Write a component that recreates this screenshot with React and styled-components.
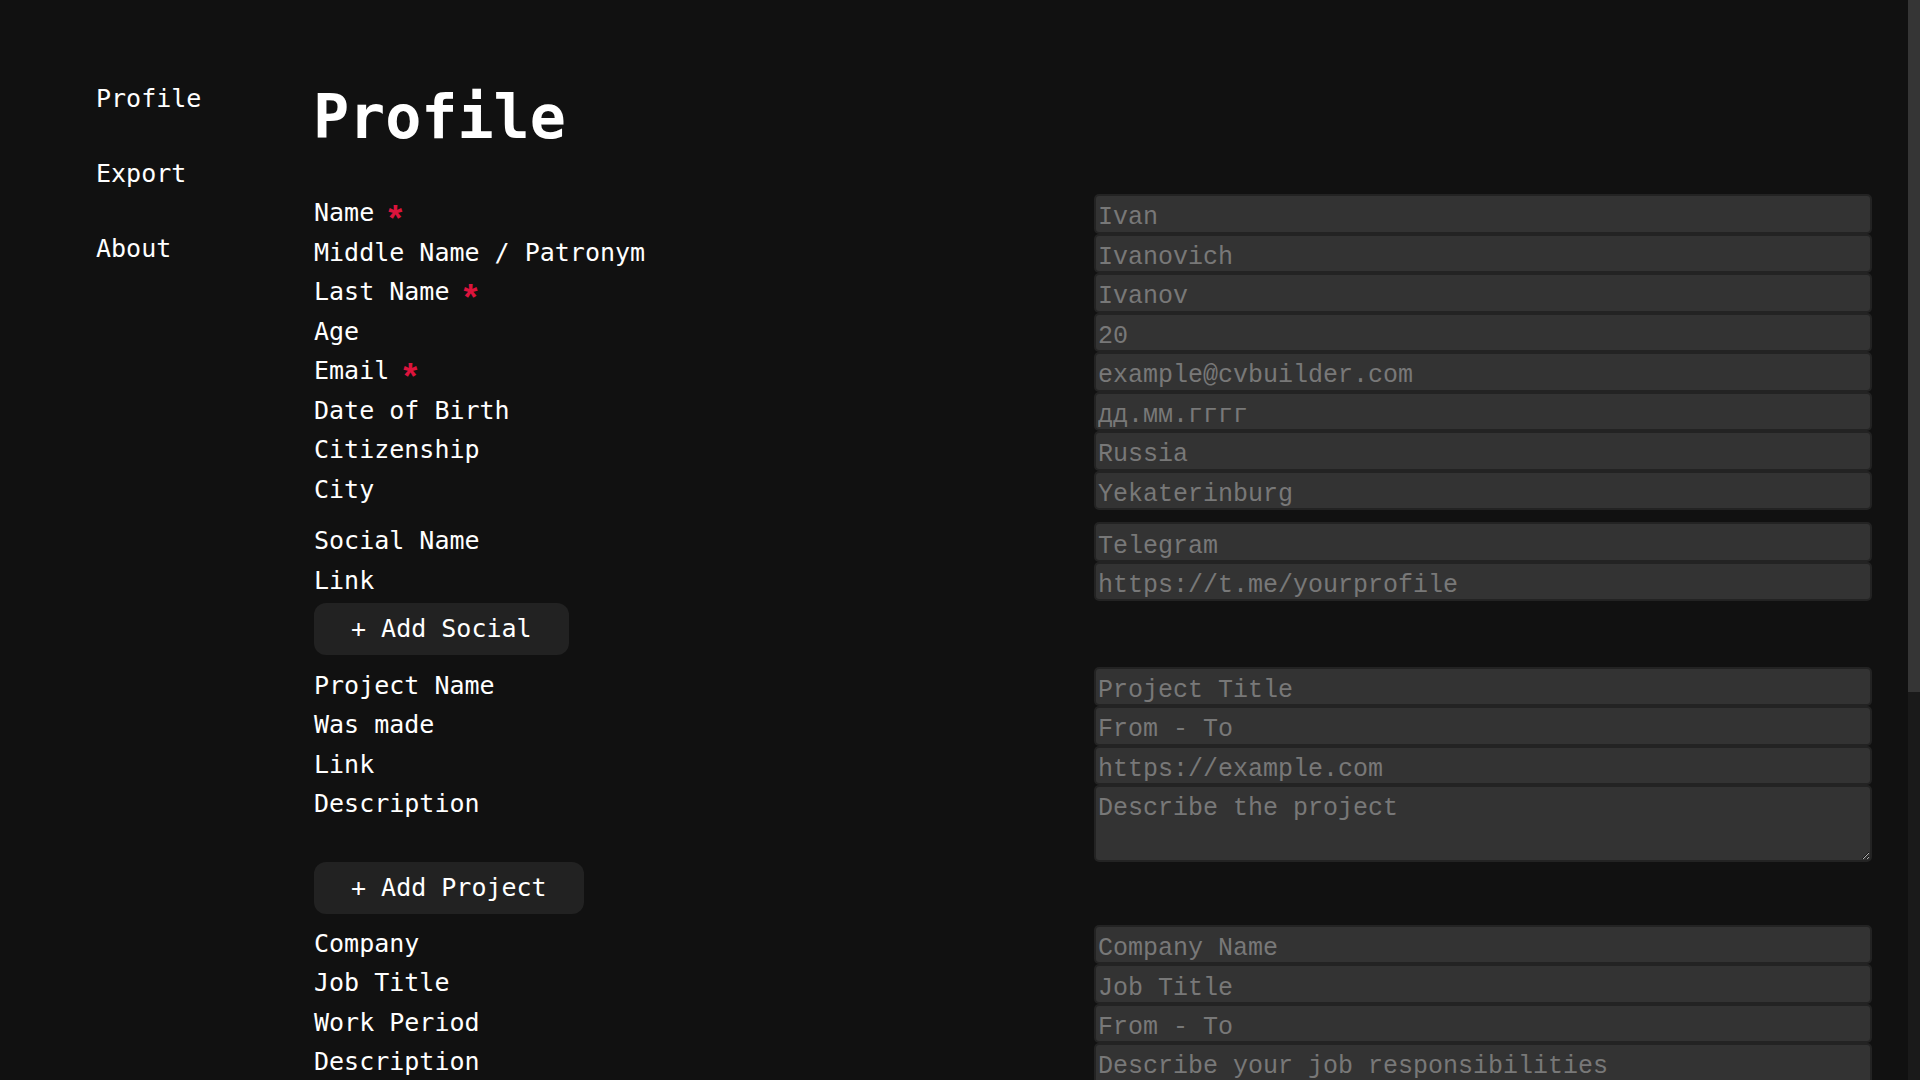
import React from 'react';
import styled, { createGlobalStyle } from 'styled-components';

const GlobalStyle = createGlobalStyle`
  html, body {
    margin: 0;
    padding: 0;
    background: #111111;
  }
  body {
    font-family: "DejaVu Sans Mono", "Liberation Mono", monospace;
    color: #ffffff;
  }
  ::-webkit-scrollbar { width: 0; height: 0; }
`;

const Page = styled.div`
  display: flex;
  align-items: flex-start;
  padding: 80px 48px 150px 96px;
`;

const ScrollTrack = styled.div`
  position: fixed;
  top: 0;
  right: 0;
  width: 12px;
  height: 100vh;
  background: #1a1a1a;
  z-index: 10;
`;

const ScrollThumb = styled.div`
  width: 100%;
  height: 692px;
  background: #353535;
`;

const Sidebar = styled.nav`
  flex: 0 0 218px;
  display: flex;
  flex-direction: column;
  gap: 46px;
  padding-top: 4px;
`;

const NavItem = styled.a`
  font-family: "DejaVu Sans Mono", monospace;
  font-size: 25px;
  line-height: 29px;
  color: #ffffff;
  text-decoration: none;
  cursor: pointer;
`;

const Main = styled.main`
  flex: 1 1 auto;
  min-width: 0;
  display: flex;
  flex-direction: column;
  align-items: flex-start;
`;

const Title = styled.h1`
  margin: 2px 0 42px -1px;
  font-family: "DejaVu Sans Mono", monospace;
  font-weight: 700;
  font-size: 60px;
  line-height: normal;
  color: #ffffff;
`;

const FieldGrid = styled.div`
  width: 100%;
  display: grid;
  grid-template-columns: 1fr 778px;
  align-items: start;
  margin-top: ${(p) => p.$gap || 0}px;
`;

const Label = styled.label`
  font-family: "DejaVu Sans Mono", monospace;
  font-size: 25px;
  line-height: 37.5px;
  padding-bottom: 2px;
  color: #ffffff;
  white-space: nowrap;
`;

const Required = styled.span`
  display: inline-block;
  margin-left: 14px;
  font-family: "Liberation Sans", sans-serif;
  font-weight: 700;
  font-size: 36px;
  line-height: 0;
  color: #dc143c;
  position: relative;
  top: 10px;
`;

const fieldBase = `
  box-sizing: border-box;
  width: 100%;
  margin: 0;
  background: #333333;
  border: 2px solid #232323;
  border-radius: 5px;
  color: #dddddd;
  font-family: "Liberation Mono", monospace;
  font-size: 25px;
  outline: none;
  &::placeholder { color: #787878; opacity: 1; }
`;

const TextInput = styled.input`
  ${fieldBase}
  height: 39.5px;
  padding: 8px 0 0 2px;
  line-height: normal;
`;

const TextArea = styled.textarea`
  ${fieldBase}
  display: block;
  height: 76.5px;
  padding: 7px 0 0 2px;
  line-height: normal;
  resize: vertical;
`;

const AddButton = styled.button`
  height: 52px;
  padding: 0 37px;
  margin: ${(p) => p.$gap || 0}px 0 0 0;
  background: #222222;
  border: none;
  border-radius: 12px;
  color: #ffffff;
  font-family: "DejaVu Sans Mono", monospace;
  font-size: 25px;
  line-height: 52px;
  cursor: pointer;
  white-space: nowrap;
`;

function Field({ label, required, placeholder, multiline }) {
  return (
    <>
      <Label>
        {label}
        {required && <Required>*</Required>}
      </Label>
      {multiline ? (
        <TextArea placeholder={placeholder} />
      ) : (
        <TextInput type="text" placeholder={placeholder} />
      )}
    </>
  );
}

const personal = [
  { label: 'Name', required: true, placeholder: 'Ivan' },
  { label: 'Middle Name / Patronym', placeholder: 'Ivanovich' },
  { label: 'Last Name', required: true, placeholder: 'Ivanov' },
  { label: 'Age', placeholder: '20' },
  { label: 'Email', required: true, placeholder: 'example@cvbuilder.com' },
  { label: 'Date of Birth', placeholder: 'дд.мм.гггг' },
  { label: 'Citizenship', placeholder: 'Russia' },
  { label: 'City', placeholder: 'Yekaterinburg' },
];

const social = [
  { label: 'Social Name', placeholder: 'Telegram' },
  { label: 'Link', placeholder: 'https://t.me/yourprofile' },
];

const project = [
  { label: 'Project Name', placeholder: 'Project Title' },
  { label: 'Was made', placeholder: 'From - To' },
  { label: 'Link', placeholder: 'https://example.com' },
  { label: 'Description', placeholder: 'Describe the project', multiline: true },
];

const work = [
  { label: 'Company', placeholder: 'Company Name' },
  { label: 'Job Title', placeholder: 'Job Title' },
  { label: 'Work Period', placeholder: 'From - To' },
  { label: 'Description', placeholder: 'Describe your job responsibilities', multiline: true },
];

const education = [
  { label: 'Institution', placeholder: 'University Name' },
  { label: 'Degree', placeholder: 'Bachelor' },
  { label: 'Study Period', placeholder: 'From - To' },
];

const extra = [
  { label: 'Skills', placeholder: 'List your skills', multiline: true },
  { label: 'About Me', placeholder: 'Tell about yourself', multiline: true },
];

function Group({ fields, gap }) {
  return (
    <FieldGrid $gap={gap}>
      {fields.map((f, i) => (
        <Field key={i} {...f} />
      ))}
    </FieldGrid>
  );
}

export default function App() {
  return (
    <>
      <GlobalStyle />
      <Page>
        <Sidebar>
          <NavItem>Profile</NavItem>
          <NavItem>Export</NavItem>
          <NavItem>About</NavItem>
        </Sidebar>
        <Main>
          <Title>Profile</Title>
          <Group fields={personal} />
          <Group fields={social} gap={12.3} />
          <AddButton $gap={2}>+ Add Social</AddButton>
          <Group fields={project} gap={11.3} />
          <AddButton>+ Add Project</AddButton>
          <Group fields={work} gap={11.3} />
          <AddButton>+ Add Experience</AddButton>
          <Group fields={education} gap={11.3} />
          <AddButton>+ Add Education</AddButton>
          <Group fields={extra} gap={11.3} />
        </Main>
      </Page>
      <ScrollTrack aria-hidden="true">
        <ScrollThumb />
      </ScrollTrack>
    </>
  );
}
